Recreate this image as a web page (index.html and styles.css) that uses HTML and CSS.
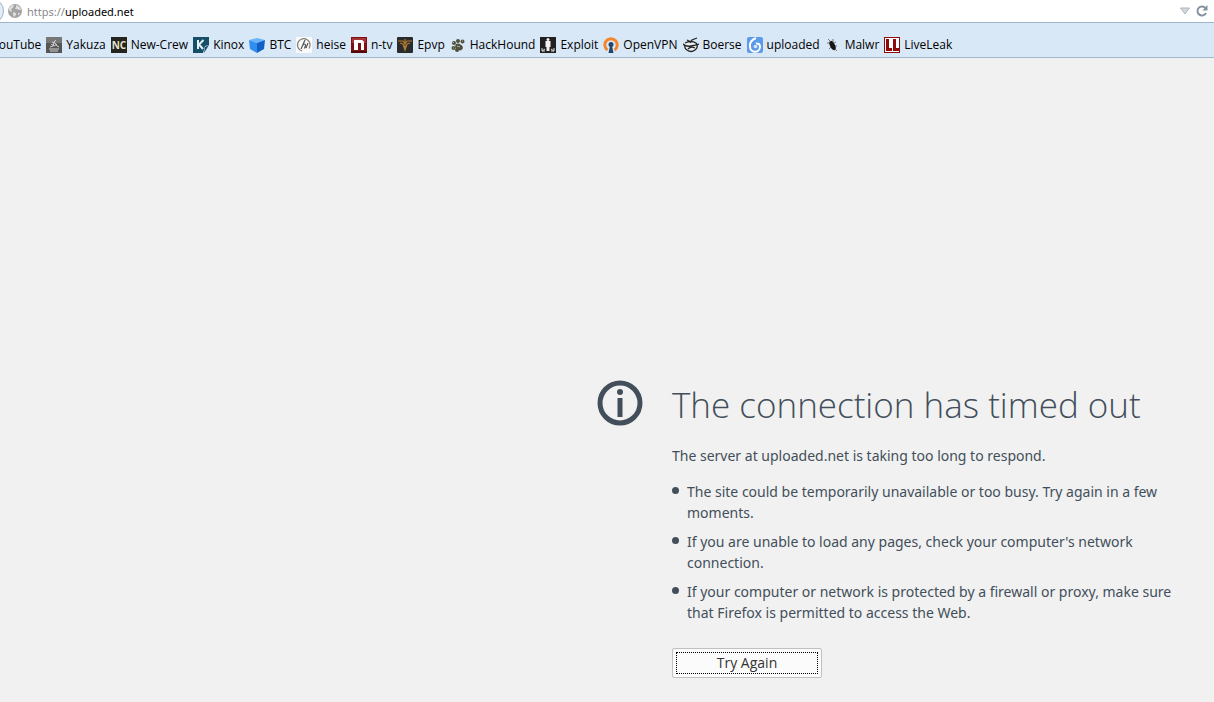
FILE: index.html
```html
<!DOCTYPE html>
<html lang="en">
<head>
  <meta charset="UTF-8" />
  <meta name="viewport" content="width=device-width, initial-scale=1.0"/>
  <title>Problem loading page</title>
  <link rel="stylesheet" href="styles.css">
</head>
<body>
  <!-- Address bar -->
  <div class="url-bar">
    <span class="back-edge"></span>
    <svg class="globe" viewBox="0 0 16 16" width="16" height="16">
      <circle cx="8" cy="8" r="7" fill="#a3a3a3"/>
      <path d="M2 5l3-3 2 0-1 3-2 1 1 2-1 1-2-2zM9 2l4 2 1 3-2 0-2-1-2 0 1-2zM6 9l3 1 0 2-2 2-1-2zM11 10l2 0-1 2-1 0z" fill="#dedede"/>
    </svg>
    <label class="scheme" for="url">https://</label>
    <input type="text" id="url" class="url-input" value="uploaded.net" spellcheck="false" />
    <button class="bar-button" aria-label="Show history">
      <svg viewBox="0 0 10 8" width="10" height="8">
        <path d="M.5 1h9L5 7z" fill="#d3d8df" stroke="#aeb5be"/>
      </svg>
    </button>
    <button class="bar-button" aria-label="Reload">
      <svg viewBox="0 0 12 12" width="12" height="12">
        <path d="M9.5 3.2A4.5 4.5 0 1 0 10 8" fill="none" stroke="#84909f" stroke-width="2"/>
        <path d="M11.5 0v5.500H6.500z" fill="#84909f"/>
      </svg>
    </button>
  </div>

  <!-- Bookmarks toolbar -->
  <nav class="bookmarks">
    <a href="#" class="bookmark first">YouTube</a>
    <a href="#" class="bookmark">
      <svg viewBox="0 0 16 16" width="16" height="16">
        <rect width="16" height="16" fill="#555"/>
        <rect width="16" height="6" fill="#777"/>
        <path d="M3 12h10M4 10l3-1 1-4 2-2M6 5l3 1 2 3 2 1M5 7l3 2 3-2M4 14h8" fill="none" stroke="#d2d2d2"/>
      </svg>
      Yakuza
    </a>
    <a href="#" class="bookmark">
      <svg viewBox="0 0 16 16" width="16" height="16">
        <rect width="16" height="16" fill="#25241f"/>
        <text x="8" y="12" text-anchor="middle" class="logo-text" fill="#e6e3c8">NC</text>
      </svg>
      New-Crew
    </a>
    <a href="#" class="bookmark">
      <svg viewBox="0 0 16 16" width="16" height="16">
        <path d="M0 0h16v8l-4 1-2 7H0z" fill="#174f68"/>
        <path d="M5 3v9M10.500 3L6 7.500l4 4.500" fill="none" stroke="#e5f2f5" stroke-width="2"/>
        <path d="M12 10l4-2-5 8z" fill="#174f68"/>
      </svg>
      Kinox
    </a>
    <a href="#" class="bookmark">
      <svg viewBox="0 0 16 16" width="16" height="16">
        <path d="M0 3l8-2 8 2-8 3z" fill="#69b5fb"/>
        <path d="M0 3l8 3v10l-7-4z" fill="#328df0"/>
        <path d="M16 3L8 6v10l7-4z" fill="#1260c6"/>
      </svg>
      BTC
    </a>
    <a href="#" class="bookmark">
      <svg viewBox="0 0 16 16" width="16" height="16">
        <rect width="16" height="16" fill="#fafafa"/>
        <path d="M6 14A6.300 6.300 0 1 1 13 11.500" fill="none" stroke="#777" stroke-width="1.200"/>
        <path d="M9 3L5 12M6.500 8.500q3-3 3 0l-1 3M12 6l-2 5" fill="none" stroke="#555" stroke-width="1.200"/>
      </svg>
      heise
    </a>
    <a href="#" class="bookmark">
      <svg viewBox="0 0 16 16" width="16" height="16">
        <rect width="16" height="16" fill="#7d1014"/>
        <rect x="1" y="1" width="14" height="5" fill="#a63336"/>
        <path d="M3 3h7q3 0 3 3v7h-3V6H7v7H3z" fill="#fff"/>
        <path d="M0 14h16v2H0z" fill="#530709"/>
      </svg>
      n-tv
    </a>
    <a href="#" class="bookmark">
      <svg viewBox="0 0 16 16" width="16" height="16">
        <rect width="16" height="16" rx="1" fill="#292b2d"/>
        <path d="M1 4h5l2 3 2-3h5M3 6l3 1 2 6 2-6 3-1M8 2v9" fill="none" stroke="#b17a2f" stroke-width="1.200"/>
      </svg>
      Epvp
    </a>
    <a href="#" class="bookmark">
      <svg viewBox="0 0 16 16" width="16" height="16">
        <g fill="#4e513c">
          <ellipse cx="9" cy="10" rx="4" ry="3" transform="rotate(30 9 10)"/>
          <circle cx="3.500" cy="11" r="2"/>
          <circle cx="4" cy="6" r="2"/>
          <circle cx="8" cy="4" r="2"/>
          <circle cx="12.500" cy="4.500" r="2"/>
          <circle cx="7" cy="13" r="2"/>
        </g>
        <path d="M7 9l3 1M3 6l1-1M12 4h1M3 11h1" stroke="#a8ab94"/>
      </svg>
      HackHound
    </a>
    <a href="#" class="bookmark">
      <svg viewBox="0 0 16 16" width="16" height="16">
        <rect width="16" height="16" fill="#202020"/>
        <circle cx="8" cy="2.500" r="1.500" fill="#f2f2f2"/>
        <path d="M5.500 4h5v6h-1v4h-3v-4h-1z" fill="#f2f2f2"/>
        <path d="M2 11v3h3M14 11v3h-3M2 14l3-2M14 14l-3-2" fill="none" stroke="#ddd"/>
      </svg>
      Exploit
    </a>
    <a href="#" class="bookmark">
      <svg viewBox="0 0 16 16" width="16" height="16">
        <path d="M4.500 13A6.200 6.200 0 1 1 11.500 13" fill="none" stroke="#f4852b" stroke-width="3"/>
        <circle cx="8" cy="7.500" r="2.500" fill="#21456e"/>
        <path d="M7 9h2l1.500 7h-5z" fill="#21456e"/>
      </svg>
      OpenVPN
    </a>
    <a href="#" class="bookmark">
      <svg viewBox="0 0 16 16" width="16" height="16">
        <path d="M2 6q6-3 11 0 3 4-1 7-4 3-8 0-3-2-2-5" fill="#e8eef3" stroke="#222" stroke-width="1.300"/>
        <path d="M0 7q3 3 8 2t8-2M5 12q3-3 7-1M7 6l2-3 5-2M4 3l4 2" fill="none" stroke="#222" stroke-width="1.300"/>
      </svg>
      Boerse
    </a>
    <a href="#" class="bookmark">
      <svg viewBox="0 0 16 16" width="16" height="16">
        <rect width="16" height="16" rx="2" fill="#5c9be9"/>
        <path d="M9 1Q2 4 3 9.500A5 5 0 0 0 13 10Q13 6 9 6.500" fill="none" stroke="#fff" stroke-width="2"/>
        <circle cx="8.500" cy="9.500" r="1.800" fill="#d6e8fc"/>
      </svg>
      uploaded
    </a>
    <a href="#" class="bookmark">
      <svg viewBox="0 0 16 16" width="16" height="16">
        <ellipse cx="7.500" cy="8.500" rx="2.500" ry="5" transform="rotate(-25 7.500 8.500)" fill="#161616"/>
        <path d="M6 5L3 2M5 6L2 6M6 10l-2 2M8 5V2M9 6l2-1M10 9h2M10 12l2 2" stroke="#444" stroke-width=".7"/>
      </svg>
      Malwr
    </a>
    <a href="#" class="bookmark">
      <svg viewBox="0 0 16 16" width="16" height="16">
        <rect width="16" height="16" fill="#8e0a0d"/>
        <path d="M1 1h14v14H1z" fill="#fff"/>
        <path d="M2 2h3v9h3v3H2zM9 2h3v9h3v3H9z" fill="#8e0a0d"/>
      </svg>
      LiveLeak
    </a>
  </nav>

  <!-- Error page -->
  <main class="error-page">
    <svg class="info-icon" viewBox="0 0 46 46" width="46" height="46">
      <circle cx="23" cy="23" r="20" fill="none" stroke="#424f5a" stroke-width="5"/>
      <circle cx="23" cy="12" r="3" fill="#424f5a"/>
      <path d="M20.500 18h5v19h-5z" fill="#424f5a"/>
    </svg>
    <div class="error-content">
      <h1>The connection has timed out</h1>
      <p>The server at uploaded.net is taking too long to respond.</p>
      <ul>
        <li>The site could be temporarily unavailable or too busy. Try again in a few moments.</li>
        <li>If you are unable to load any pages, check your computer's network connection.</li>
        <li>If your computer or network is protected by a firewall or proxy, make sure that Firefox is permitted to access the Web.</li>
      </ul>
      <button class="try-again"><span>Try Again</span></button>
    </div>
  </main>
</body>
</html>
```
FILE: styles.css
```css
body {
  margin: 0;
  min-height: 100vh;
  display: flex;
  flex-direction: column;
  font-family: "Open Sans", "Noto Sans", sans-serif;
  background: #f1f1f1;
  color: #424f5a;
}

button {
  font-family: inherit;
  cursor: pointer;
}

.url-bar {
  display: flex;
  align-items: center;
  height: 22px;
  padding-right: 6px;
  background: #fff;
  border-bottom: 1px solid #a0b6cd;
  font-family: "Noto Sans", sans-serif;
  font-size: 11px;
  overflow: hidden;
}

.back-edge {
  width: 26px;
  height: 26px;
  margin-left: -22px;
  box-sizing: border-box;
  border: 1px solid #9fb2c8;
  border-radius: 50%;
  background: #e3edf8;
}

.globe {
  margin: 0 4px 0 3px;
}

.scheme {
  color: #8a8a8a;
}

.url-input {
  flex: 1;
  min-width: 0;
  padding: 0;
  border: none;
  outline: none;
  background: none;
  font: inherit;
  color: #000;
}

.bar-button {
  display: flex;
  padding: 0;
  margin-left: 6px;
  border: none;
  background: none;
}

.bookmarks {
  display: flex;
  align-items: center;
  gap: 5px;
  height: 25px;
  padding-top: 9px;
  background: #d9e8f7;
  border-bottom: 1px solid #a0b6cd;
  overflow: hidden;
}

.bookmark {
  display: flex;
  align-items: center;
  gap: 4px;
  font-size: 12px;
  line-height: 16px;
  white-space: nowrap;
  color: #000;
  text-decoration: none;
}

.bookmark.first {
  margin-left: -8px;
}

.logo-text {
  font-size: 10px;
  font-weight: bold;
}

.error-page {
  display: flex;
  align-items: flex-start;
  justify-content: flex-end;
  gap: 29px;
  margin-top: auto;
  padding: 24px 30px;
}

.error-content {
  width: 512px;
}

h1 {
  margin: 0 0 15px;
  font-size: 35px;
  font-weight: 300;
  line-height: 50px;
}

p,
li {
  font-family: "Noto Sans", sans-serif;
  font-size: 14px;
  line-height: 21px;
}

p {
  margin: 0 0 15px;
}

ul {
  margin: 0 0 25px;
  padding: 0;
  list-style: none;
}

li {
  display: flex;
  gap: 8px;
  margin-bottom: 8px;
}

li::before {
  content: "";
  flex: none;
  width: 7px;
  height: 7px;
  margin-top: 6px;
  border-radius: 50%;
  background: #424f5a;
}

.try-again {
  width: 150px;
  height: 30px;
  padding: 3px;
  border: 1px solid #c1c1c1;
  border-radius: 2px;
  background: #fbfbfb;
  font-size: 14px;
  line-height: 20px;
  color: #333;
}

.try-again span {
  display: block;
  border: 1px dotted #000;
}
```
